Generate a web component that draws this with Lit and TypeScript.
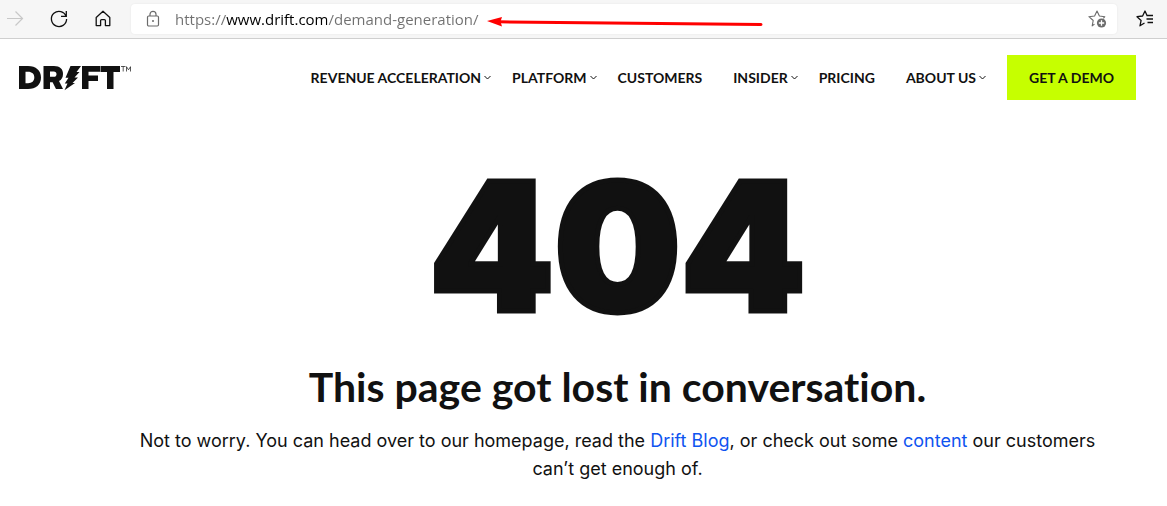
import { LitElement, html, css, svg, nothing } from "lit";
import { customElement } from "lit/decorators.js";

interface NavItem {
  label: string;
  menu: boolean;
}

const NAV_ITEMS: NavItem[] = [
  { label: "REVENUE ACCELERATION", menu: true },
  { label: "PLATFORM", menu: true },
  { label: "CUSTOMERS", menu: false },
  { label: "INSIDER", menu: true },
  { label: "PRICING", menu: false },
  { label: "ABOUT US", menu: true },
];

@customElement("browser-bar")
class BrowserBar extends LitElement {
  static styles = css`
    :host {
      display: block;
    }
    .bar {
      position: relative;
      display: flex;
      align-items: center;
      height: 38px;
      background: #f6f6f6;
      border-bottom: 1px solid #cfcfcf;
    }
    .tool {
      flex: none;
      display: flex;
      padding: 0;
      border: 0;
      background: none;
      color: #101010;
    }
    .tool:disabled {
      color: #c8c8c8;
    }
    .tools {
      display: flex;
      gap: 20px;
      padding: 0 16px 0 3px;
    }
    .address {
      flex: 1;
      display: flex;
      align-items: center;
      gap: 10px;
      height: 30px;
      padding: 0 8px 0 10px;
      border-radius: 4px;
      background: #fff;
      color: #6b6b6b;
      box-shadow: 0 0 2px rgba(0, 0, 0, 0.08);
    }
    .address .tool {
      color: #6b6b6b;
    }
    .url {
      flex: 1;
      min-width: 0;
      height: 24px;
      padding: 0;
      border: 0;
      outline: 0;
      font: 15px/24px "Open Sans", "Noto Sans", sans-serif;
      color: transparent;
      background: linear-gradient(90deg, #707070 51px, #000 51px, #000 152px, #707070 152px);
      -webkit-background-clip: text;
      background-clip: text;
    }
    .end {
      padding: 0 10px 0 16px;
    }
    .arrow {
      position: absolute;
      left: 487px;
      top: 14px;
      pointer-events: none;
    }
  `;

  render() {
    return html`
      <div class="bar">
        <div class="tools">
          <button class="tool" aria-label="Forward" disabled>
            <svg width="24" height="24" viewBox="0 0 24 24" fill="none" stroke="currentColor" stroke-width="1.2">
              <path d="M4 11.5H19.5M12.5 4.5L19.5 11.5L12.5 18.5" />
            </svg>
          </button>
          <button class="tool" aria-label="Refresh">
            <svg width="24" height="24" viewBox="0 0 24 24" fill="none" stroke="currentColor" stroke-width="1.3">
              <path d="M19.2 9.5A7.6 7.6 0 1 0 19.6 12M19.3 4V9.4H14" />
            </svg>
          </button>
          <button class="tool" aria-label="Home">
            <svg width="24" height="24" viewBox="0 0 24 24" fill="none" stroke="currentColor" stroke-width="1.3" stroke-linejoin="round">
              <path d="M5.2 10.4L12 4.3L18.8 10.4V18.6H14.4V13.6Q14.4 12.6 13.4 12.6H10.6Q9.6 12.6 9.6 13.6V18.6H5.2Z" />
            </svg>
          </button>
        </div>
        <div class="address">
          <button class="tool" aria-label="Site information">
            <svg width="24" height="24" viewBox="0 0 24 24" fill="none" stroke="currentColor" stroke-width="1.2">
              <rect x="6.500" y="9" width="11" height="10" rx="1.2" />
              <path d="M9 9V7.300A3 3 0 0 1 15 7.300V9" />
              <circle cx="12" cy="14" r="1" fill="currentColor" stroke="none" />
            </svg>
          </button>
          <input class="url" type="text" aria-label="Address" value="https://www.drift.com/demand-generation/" />
          <button class="tool" aria-label="Add to favorites">
            <svg width="24" height="24" viewBox="0 0 24 24" fill="none" stroke="currentColor" stroke-width="1.1" stroke-linejoin="round">
              <path d="M9.5 17.1L7.2 18.8L8.2 13.5L3.9 9.7L9.6 9L12 4L14.4 9L19.8 9.7L18.4 11.4" />
              <circle cx="16.5" cy="16" r="4.6" fill="currentColor" stroke="none" />
              <path d="M13.800 16H19.200M16.500 13.300V18.700" stroke="#fff" stroke-width="1.3" />
            </svg>
          </button>
        </div>
        <div class="end">
          <button class="tool" aria-label="Favorites">
            <svg width="24" height="24" viewBox="0 0 24 24" fill="none" stroke="currentColor" stroke-width="1.3" stroke-linejoin="round">
              <path d="M11.5 16L7 18.8L8.1 13.4L4 9.7L9.6 9L12 4L14 8.500M13.500 8.500H20M13.5 12H20M14.5 15.500H20" />
            </svg>
          </button>
        </div>
        <svg class="arrow" width="276" height="14" viewBox="0 0 276 14" aria-hidden="true">
          <path d="M12 7.8L274 10.5" stroke="#f00" stroke-width="3" stroke-linecap="round" />
          <path d="M0 7L15 3L13.5 7.5L15 12.5Z" fill="#f00" />
        </svg>
      </div>
    `;
  }
}

@customElement("site-header")
class SiteHeader extends LitElement {
  static styles = css`
    :host {
      display: block;
    }
    .header {
      display: flex;
      align-items: center;
      justify-content: space-between;
      padding: 16px 31px 0 19px;
      font: 700 14px/20px "Lato", "Open Sans", sans-serif;
    }
    .logo {
      display: flex;
      color: #111;
    }
    .nav {
      display: flex;
      align-items: center;
      gap: 31px;
    }
    .item {
      display: flex;
      align-items: center;
      gap: 3px;
      color: #111;
      text-decoration: none;
      white-space: nowrap;
    }
    .menu {
      margin-right: -10px;
    }
    .demo {
      height: 45px;
      padding: 0 22px;
      border: 0;
      background: #c6ff00;
      color: #111;
      font: inherit;
      white-space: nowrap;
    }
  `;

  render() {
    return html`
      <header class="header">
        <a class="logo" href="#" aria-label="Drift home">
          <svg width="112" height="26" viewBox="0 0 112 26" fill="currentColor">
            <path fill-rule="evenodd" d="M0 1H9C17 1 22 5.500 22 12.500S17 24 9 24H0ZM6.500 6.800V18.200H9C13 18.200 15.300 16 15.300 12.500S13 6.800 9 6.800Z" />
            <path fill-rule="evenodd" d="M24.500 1H35C41 1 44 4 44 9C44 12.500 42.500 14.800 40 16L44 24H37L33.600 17.200H31V24H24.500ZM31 6.500V11.800H34.700C36.500 11.800 37.500 10.800 37.500 9.200S36.500 6.500 34.700 6.500Z" />
            <path d="M51.500 1H62L57.500 7H60.500L55.500 12.500H59L53.500 18H56L45.500 25.300L48.500 18.500H45.800L49.500 12.800H46.500Z" />
            <path d="M63 1H81V6.800H69.500V10.500H79V16H69.500V24H63Z" />
            <path d="M81.500 1H101V7H94.500V24H88V7H81.500Z" />
            <path d="M102 1.500H106.500M104.200 1.500V6.500M107.500 6.500V1.700L109.500 4.800L111.500 1.700V6.500" fill="none" stroke="currentColor" stroke-width="0.700" />
          </svg>
        </a>
        <nav class="nav">
          ${NAV_ITEMS.map(
            (item) => html`
              <a class="item ${item.menu ? "menu" : ""}" href="#"
                >${item.label}${item.menu
                  ? html`<svg width="7" height="6" viewBox="0 0 7 6" fill="none" stroke="currentColor">
                      ${svg`<path d="M0.500 1L3.500 4L6.500 1" />`}
                    </svg>`
                  : nothing}</a
              >
            `
          )}
          <button class="demo">GET A DEMO</button>
        </nav>
      </header>
    `;
  }
}

@customElement("app-root")
class AppRoot extends LitElement {
  static styles = css`
    :host {
      display: block;
      min-height: 100vh;
      background: #fff;
      color: #111;
    }
    .main {
      padding: 37px 33px 0 101px;
      text-align: center;
      font-family: "Lato", "Open Sans", sans-serif;
    }
    .code {
      margin: 0;
      font: 900 178px/220px "Inter", sans-serif;
      -webkit-text-stroke: 5px #111;
    }
    .title {
      margin: 6px 0 0;
      font-size: 41px;
      line-height: 48px;
      font-weight: 700;
      font-variant-ligatures: none;
    }
    .text {
      max-width: 980px;
      margin: 16px auto 0;
      font-family: "Inter", sans-serif;
      font-size: 18px;
      line-height: 28px;
    }
    .link {
      color: #0f54f0;
      text-decoration: none;
    }
  `;

  render() {
    return html`
      <browser-bar></browser-bar>
      <site-header></site-header>
      <main class="main">
        <p class="code">404</p>
        <h1 class="title">This page got lost in conversation.</h1>
        <p class="text">
          Not to worry. You can head over to our homepage, read the
          <a class="link" href="#">Drift Blog</a>, or check out some
          <a class="link" href="#">content</a> our customers can’t get enough of.
        </p>
      </main>
    `;
  }
}
